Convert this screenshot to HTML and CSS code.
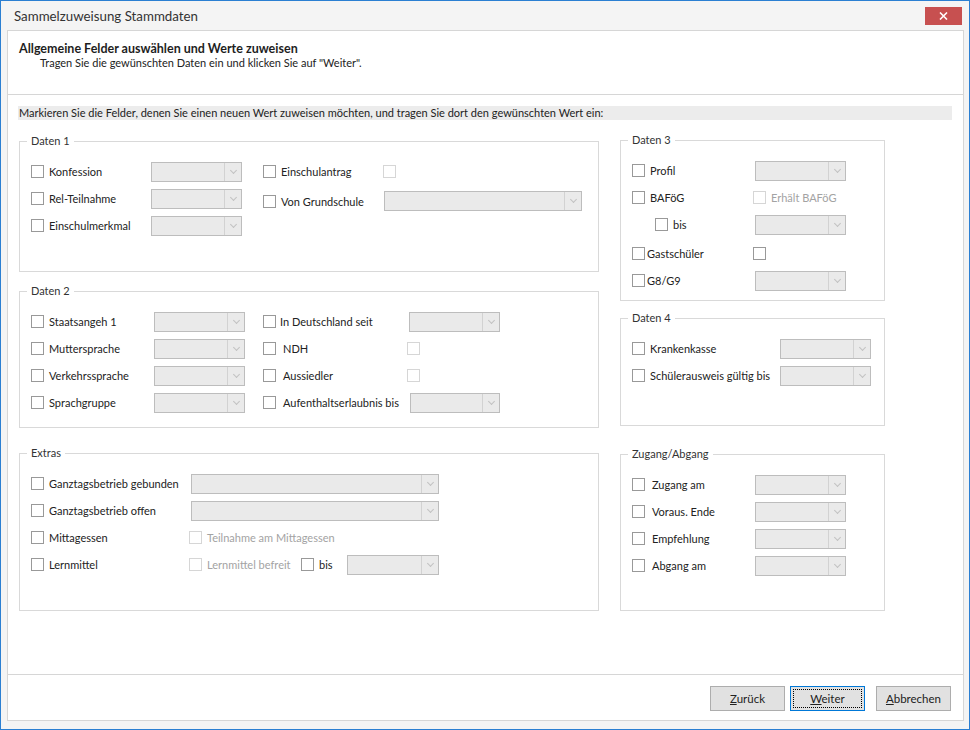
FILE: index.html
```html
<!DOCTYPE html>
<html>
<head>
    <link rel="stylesheet" href="styles.css">
</head>
<body>
<div class="window">
    <div class="titlebar">
        <span class="title">Sammelzuweisung Stammdaten</span>
        <span class="close">
            <svg width="9" height="8" viewBox="0 0 9 8"><path d="M1 0.5 L8 7.5 M8 0.5 L1 7.5" stroke="#fff" stroke-width="1.6"/></svg>
        </span>
    </div>

    <div class="panel">
        <div class="header">
            <div class="header-title">Allgemeine Felder auswählen und Werte zuweisen</div>
            <div class="header-sub">Tragen Sie die gewünschten Daten ein und klicken Sie auf "Weiter".</div>
        </div>

        <div class="main">
            <div class="hint">Markieren Sie die Felder, denen Sie einen neuen Wert zuweisen möchten, und tragen Sie dort den gewünschten Wert ein:</div>

            <div class="columns">
                <div class="col-left">
                    <!-- Daten 1 -->
                    <fieldset class="group daten1">
                        <legend>Daten 1</legend>
                        <div class="split">
                            <div class="stack">
                                <div class="row">
                                    <label class="chk w-120"><span class="box"></span>Konfession</label>
                                    <div class="combo w-91"><span class="arrow"></span></div>
                                </div>
                                <div class="row">
                                    <label class="chk w-120"><span class="box"></span>Rel-Teilnahme</label>
                                    <div class="combo w-91"><span class="arrow"></span></div>
                                </div>
                                <div class="row">
                                    <label class="chk w-120"><span class="box"></span>Einschulmerkmal</label>
                                    <div class="combo w-91"><span class="arrow"></span></div>
                                </div>
                            </div>
                            <div class="stack stack-wide">
                                <div class="row row-tall">
                                    <label class="chk w-120"><span class="box"></span>Einschulantrag</label>
                                    <span class="box disabled"></span>
                                </div>
                                <div class="row row-tall">
                                    <label class="chk w-121"><span class="box"></span>Von Grundschule</label>
                                    <div class="combo w-198"><span class="arrow"></span></div>
                                </div>
                            </div>
                        </div>
                    </fieldset>

                    <!-- Daten 2 -->
                    <fieldset class="group daten2">
                        <legend>Daten 2</legend>
                        <div class="row">
                            <label class="chk w-123"><span class="box"></span>Staatsangeh 1</label>
                            <div class="combo w-91"><span class="arrow"></span></div>
                            <label class="chk chk-near w-146 ml-18"><span class="box"></span>In Deutschland seit</label>
                            <div class="combo w-91"><span class="arrow"></span></div>
                        </div>
                        <div class="row">
                            <label class="chk w-123"><span class="box"></span>Muttersprache</label>
                            <div class="combo w-91"><span class="arrow"></span></div>
                            <label class="chk chk-wide w-144 ml-18"><span class="box"></span>NDH</label>
                            <span class="box disabled"></span>
                        </div>
                        <div class="row">
                            <label class="chk w-123"><span class="box"></span>Verkehrssprache</label>
                            <div class="combo w-91"><span class="arrow"></span></div>
                            <label class="chk chk-wide w-144 ml-18"><span class="box"></span>Aussiedler</label>
                            <span class="box disabled"></span>
                        </div>
                        <div class="row">
                            <label class="chk w-123"><span class="box"></span>Sprachgruppe</label>
                            <div class="combo w-91"><span class="arrow"></span></div>
                            <label class="chk chk-wide w-147 ml-18"><span class="box"></span>Aufenthaltserlaubnis bis</label>
                            <div class="combo w-90"><span class="arrow"></span></div>
                        </div>
                    </fieldset>

                    <!-- Extras -->
                    <fieldset class="group extras">
                        <legend>Extras</legend>
                        <div class="row">
                            <label class="chk w-160"><span class="box"></span>Ganztagsbetrieb gebunden</label>
                            <div class="combo w-248"><span class="arrow"></span></div>
                        </div>
                        <div class="row">
                            <label class="chk w-160"><span class="box"></span>Ganztagsbetrieb offen</label>
                            <div class="combo w-248"><span class="arrow"></span></div>
                        </div>
                        <div class="row">
                            <label class="chk w-158"><span class="box"></span>Mittagessen</label>
                            <label class="chk off"><span class="box disabled"></span>Teilnahme am Mittagessen</label>
                        </div>
                        <div class="row">
                            <label class="chk w-158"><span class="box"></span>Lernmittel</label>
                            <label class="chk off w-112"><span class="box disabled"></span>Lernmittel befreit</label>
                            <label class="chk w-46"><span class="box"></span>bis</label>
                            <div class="combo w-92"><span class="arrow"></span></div>
                        </div>
                    </fieldset>
                </div>

                <div class="col-right">
                    <!-- Daten 3 -->
                    <fieldset class="group daten3">
                        <legend>Daten 3</legend>
                        <div class="row">
                            <label class="chk w-123"><span class="box"></span>Profil</label>
                            <div class="combo w-91"><span class="arrow"></span></div>
                        </div>
                        <div class="row">
                            <label class="chk w-121"><span class="box"></span>BAFöG</label>
                            <label class="chk off"><span class="box disabled"></span>Erhält BAFöG</label>
                        </div>
                        <div class="row">
                            <label class="chk w-100 ml-23"><span class="box"></span>bis</label>
                            <div class="combo w-91"><span class="arrow"></span></div>
                        </div>
                        <div class="row row-gap">
                            <label class="chk chk-tight w-121"><span class="box"></span>Gastschüler</label>
                            <span class="box"></span>
                        </div>
                        <div class="row">
                            <label class="chk chk-tight w-123"><span class="box"></span>G8/G9</label>
                            <div class="combo w-91"><span class="arrow"></span></div>
                        </div>
                    </fieldset>

                    <!-- Daten 4 -->
                    <fieldset class="group daten4">
                        <legend>Daten 4</legend>
                        <div class="row">
                            <label class="chk w-148"><span class="box"></span>Krankenkasse</label>
                            <div class="combo w-91"><span class="arrow"></span></div>
                        </div>
                        <div class="row">
                            <label class="chk w-148"><span class="box"></span>Schülerausweis gültig bis</label>
                            <div class="combo w-91"><span class="arrow"></span></div>
                        </div>
                    </fieldset>

                    <!-- Zugang/Abgang -->
                    <fieldset class="group zugang">
                        <legend>Zugang/Abgang</legend>
                        <div class="row">
                            <label class="chk chk-wide w-123"><span class="box"></span>Zugang am</label>
                            <div class="combo w-91"><span class="arrow"></span></div>
                        </div>
                        <div class="row">
                            <label class="chk chk-wide w-123"><span class="box"></span>Voraus. Ende</label>
                            <div class="combo w-91"><span class="arrow"></span></div>
                        </div>
                        <div class="row">
                            <label class="chk chk-wide w-123"><span class="box"></span>Empfehlung</label>
                            <div class="combo w-91"><span class="arrow"></span></div>
                        </div>
                        <div class="row">
                            <label class="chk chk-wide w-123"><span class="box"></span>Abgang am</label>
                            <div class="combo w-91"><span class="arrow"></span></div>
                        </div>
                    </fieldset>
                </div>
            </div>
        </div>

        <div class="footer">
            <button class="btn"><u>Z</u>urück</button>
            <button class="btn btn-default"><u>W</u>eiter</button>
            <button class="btn btn-cancel"><u>A</u>bbrechen</button>
        </div>
    </div>
</div>
</body>
</html>
```

FILE: styles.css
```css
* {
    box-sizing: border-box;
}

body {
    margin: 0;
    font-family: Lato, "Liberation Sans", sans-serif;
    font-size: 11px;
    color: #222;
}

.window {
    width: 970px;
    height: 730px;
    border: 1px solid #2b7fd2;
    background: #f4f4f4;
    display: flex;
    flex-direction: column;
}

.titlebar {
    height: 29px;
    display: flex;
    justify-content: space-between;
    align-items: flex-start;
    padding: 0 7px 0 13px;
}

.title {
    font-size: 13.3px;
    line-height: 30px;
    color: #333;
}

.close {
    width: 37px;
    height: 18px;
    margin-top: 6px;
    background: #c75050;
    display: flex;
    align-items: center;
    justify-content: center;
}

.panel {
    width: 957px;
    height: 691px;
    margin-left: 6px;
    background: #fff;
    border: 1px solid #d6d6d6;
    display: flex;
    flex-direction: column;
}

.header {
    height: 64px;
    padding: 11px 11px 0;
    border-bottom: 1px solid #d6d6d6;
    line-height: 14px;
}

.header-title {
    font-weight: bold;
    font-size: 12.5px;
    color: #1e1e1e;
}

.header-sub {
    padding-left: 21px;
}

.main {
    flex: 1;
    padding: 0 11px;
}

.hint {
    margin: 11px 0 0 -1px;
    padding-left: 1px;
    line-height: 14px;
    background: #ececec;
}

.columns {
    display: flex;
    gap: 21px;
    margin-top: 14px;
}

.col-left {
    width: 580px;
}

.col-right {
    width: 265px;
    margin-top: -1px;
}

.group {
    margin: 0;
    padding: 10px 10px 0 11px;
    border: 1px solid #d9d9d9;
    min-width: 0;
}

.group legend {
    padding: 0 4px;
    margin-left: -4px;
    line-height: 14px;
    color: #333;
}

.daten1 { height: 138px; }
.daten2 { height: 144px; margin-top: 12px; }
.extras { height: 165px; margin-top: 18px; }
.daten3 { height: 168px; }
.daten4 { height: 115px; margin-top: 10px; }
.zugang { height: 164px; margin-top: 21px; }

.split {
    display: flex;
    gap: 21px;
}

.stack-wide {
    margin-top: -2px;
}

.row {
    height: 27px;
    display: flex;
    align-items: center;
}

.row-tall {
    height: 30px;
}

.row-gap {
    margin-top: 2px;
}

.chk {
    display: flex;
    align-items: center;
    gap: 5px;
    white-space: nowrap;
    flex-shrink: 0;
}

.chk-tight { gap: 2px; }
.chk-near { gap: 4px; }
.chk-wide { gap: 7px; }

.chk.off {
    color: #a3a3a3;
}

.box {
    width: 13px;
    height: 13px;
    border: 1px solid #999;
    background: #fff;
    flex-shrink: 0;
}

.box.disabled {
    border-color: #d6d6d6;
}

.combo {
    height: 20px;
    border: 1px solid #bdbdbd;
    background: #eaeaea;
    display: flex;
    justify-content: flex-end;
    flex-shrink: 0;
}

.arrow {
    width: 17px;
    border-left: 1px solid #d2d2d2;
    display: flex;
    align-items: center;
    justify-content: center;
}

.arrow::after {
    content: "";
    width: 4px;
    height: 4px;
    margin-top: -3px;
    border-right: 1px solid #c2c2c2;
    border-bottom: 1px solid #c2c2c2;
    transform: rotate(45deg);
}

.w-46 { width: 46px; }
.w-90 { width: 90px; }
.w-91 { width: 91px; }
.w-92 { width: 92px; }
.w-100 { width: 100px; }
.w-112 { width: 112px; }
.w-120 { width: 120px; }
.w-121 { width: 121px; }
.w-123 { width: 123px; }
.w-144 { width: 144px; }
.w-146 { width: 146px; }
.w-147 { width: 147px; }
.w-148 { width: 148px; }
.w-158 { width: 158px; }
.w-160 { width: 160px; }
.w-198 { width: 198px; }
.w-248 { width: 248px; }

.ml-18 { margin-left: 18px; }
.ml-23 { margin-left: 23px; }

.footer {
    height: 46px;
    border-top: 1px solid #d6d6d6;
    padding: 11px 12px 0;
    display: flex;
    justify-content: flex-end;
    align-items: flex-start;
    gap: 5px;
}

.btn {
    width: 75px;
    height: 25px;
    border: 1px solid #adadad;
    background: #e1e1e1;
    font-family: inherit;
    font-size: 11.5px;
    color: #222;
    padding: 0;
}

.btn-default {
    border-color: #0078d7;
    outline: 1px dotted #000;
    outline-offset: -4px;
}

.btn-cancel {
    margin-left: 6px;
}
```
